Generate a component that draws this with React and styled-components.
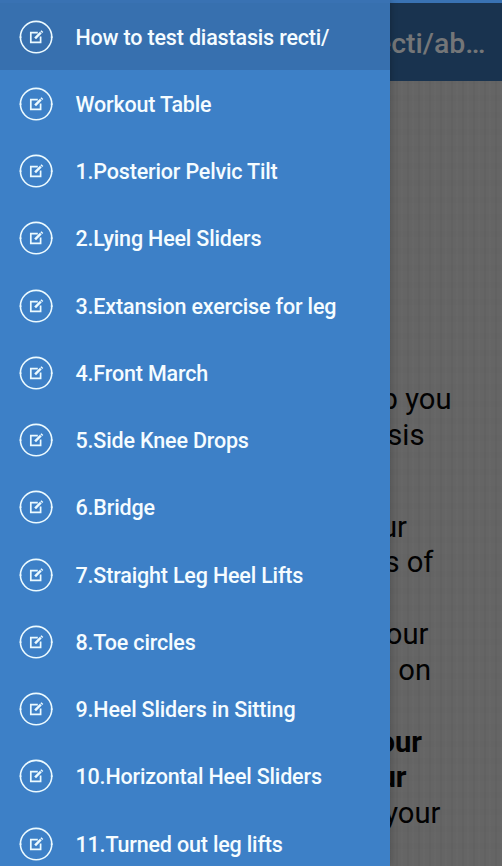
import React from "react";
import styled, { createGlobalStyle } from "styled-components";

const GlobalStyle = createGlobalStyle`
  body { margin: 0; overflow: hidden; background: #666; }
  * { box-sizing: border-box; }
`;

const Screen = styled.div`
  position: relative;
  width: 502px;
  height: 866px;
  overflow: hidden;
  font-family: Roboto, sans-serif;
`;

const Page = styled.main`
  display: flex;
  flex-direction: column;
  height: 100%;
  background:
    repeating-linear-gradient(90deg, rgba(0, 0, 0, 0.03) 0 2px, transparent 2px 5px, rgba(255, 255, 255, 0.01) 5px 7px, transparent 7px 11px),
    repeating-linear-gradient(0deg, rgba(0, 0, 0, 0.01) 0 6px, transparent 6px 17px),
    #656565;
`;

const StatusBar = styled.div`
  flex: none;
  height: 3px;
  background: #3972b3;
`;

const AppBar = styled.header`
  flex: none;
  display: flex;
  align-items: center;
  justify-content: flex-end;
  height: 78px;
  padding: 2px 16.5px 0 0;
  background: #19334f;
  color: #747678;
  font-size: 28.5px;
  font-weight: 500;
  white-space: nowrap;
`;

const Article = styled.article`
  display: flex;
  flex-direction: column;
  padding-top: 301px;
  color: #020202;
  font-size: 29.2px;
  line-height: 35.5px;
`;

const Paragraph = styled.p`
  margin: 0 0 ${(p) => p.$gap}px;
`;

const Line = styled.span`
  display: block;
  width: ${(p) => p.$end}px;
  text-align: right;
  white-space: nowrap;
  font-weight: ${(p) => (p.$bold ? 700 : 400)};
`;

const Drawer = styled.nav`
  position: absolute;
  top: 0;
  left: 0;
  width: 390px;
  height: 100%;
  overflow: hidden;
  padding-top: 3px;
  background: linear-gradient(#3972b3 0 3px, #3d80c7 3px);
  box-shadow: 0 0 7px rgba(0, 0, 0, 0.3);
`;

const MenuItem = styled.a`
  display: flex;
  align-items: center;
  gap: 21.5px;
  height: 67.25px;
  padding-left: 19px;
  background: ${(p) => (p.$active ? "#3770af" : "transparent")};
  color: #f5fcff;
  font-size: 21.5px;
  letter-spacing: -0.17px;
  font-weight: 500;
  white-space: nowrap;
`;

const Label = styled.span`
  padding-top: 1px;
`;

const Icon = styled.svg`
  flex: none;
  width: 35px;
  height: 35px;
  margin-top: 1px;
  fill: none;
  stroke: #ecfaff;
`;

const items = [
  "How to test diastasis recti/",
  "Workout Table",
  "1.Posterior Pelvic Tilt",
  "2.Lying Heel Sliders",
  "3.Extansion exercise for leg",
  "4.Front March",
  "5.Side Knee Drops",
  "6.Bridge",
  "7.Straight Leg Heel Lifts",
  "8.Toe circles",
  "9.Heel Sliders in Sitting",
  "10.Horizontal Heel Sliders",
  "11.Turned out leg lifts",
];

const paragraphs = [
  { gap: 56.5, lines: [["p you", 451.5], ["sis", 424.5]] },
  { gap: 36.5, lines: [["ur", 407], ["s of", 433.5]] },
  { gap: 36.5, lines: [["our", 428.5], ["on", 431]] },
  { gap: 0, lines: [["our", 422, true], ["ur", 406.5, true], ["your", 440.5]] },
];

const EditIcon = () => (
  <Icon viewBox="0 0 35 35" aria-hidden="true">
    <circle cx="17.1" cy="17.1" r="15.7" strokeWidth="1.6" />
    <path d="M0.6 17.1h2M31.7 17.1h2" strokeWidth="1.3" />
    <path d="M18.8 12.6h-7v9.8h9.8v-6" strokeWidth="1.7" />
    <path d="M16.1 18.4l5.7-5.7" strokeWidth="2.5" />
    <path d="M22.3 12.2l1.1-1.1" strokeWidth="2.6" />
  </Icon>
);

export default function App() {
  return (
    <Screen>
      <GlobalStyle />
      <Page>
        <StatusBar />
        <AppBar>ecti/ab…</AppBar>
        <Article>
          {paragraphs.map((paragraph, i) => (
            <Paragraph key={i} $gap={paragraph.gap}>
              {paragraph.lines.map(([text, end, bold], j) => (
                <Line key={j} $end={end} $bold={bold}>{text}</Line>
              ))}
            </Paragraph>
          ))}
        </Article>
      </Page>
      <Drawer>
        {items.map((label, i) => (
          <MenuItem key={label} $active={i === 0}>
            <EditIcon />
            <Label>{label}</Label>
          </MenuItem>
        ))}
      </Drawer>
    </Screen>
  );
}
